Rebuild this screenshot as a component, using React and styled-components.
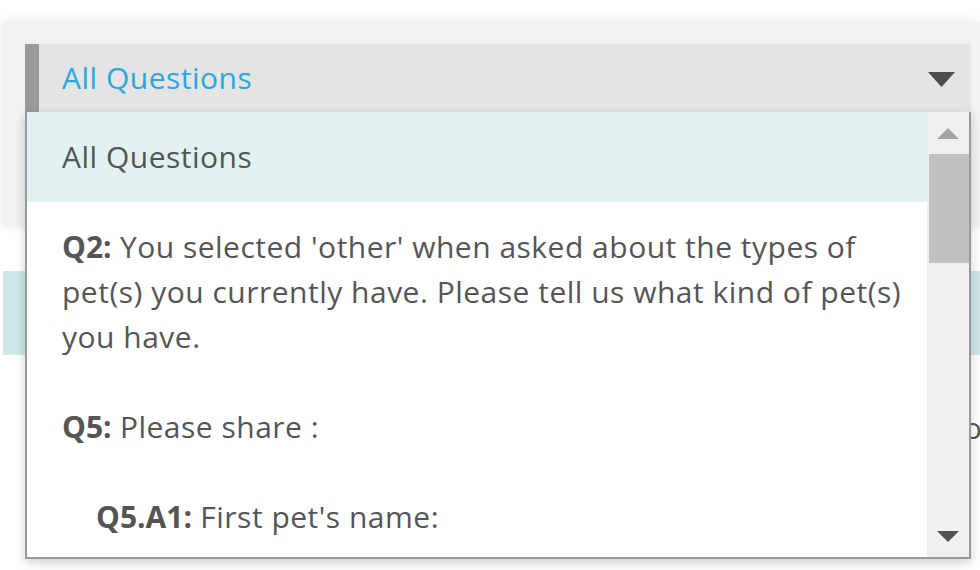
import styled, { createGlobalStyle } from 'styled-components'

const GlobalStyle = createGlobalStyle`
    html, body {
        margin: 0;
        padding: 0;
        background: #ffffff;
        overflow: hidden;
    }
    body {
        font-family: 'Open Sans', 'Noto Sans', sans-serif;
        color: #555555;
    }
`

const options = [
    { id: 'all', label: 'All Questions', active: true },
    {
        id: 'q2',
        tag: 'Q2:',
        label: " You selected 'other' when asked about the types of pet(s) you currently have. Please tell us what kind of pet(s) you have.",
    },
    { id: 'q5', tag: 'Q5:', label: ' Please share :' },
    { id: 'q5a1', tag: 'Q5.A1:', label: " First pet's name:", nested: true },
]

const Caret = ({ color, up }) => (
    <svg width="22" height="12" viewBox="0 0 22 12">
        <path d={up ? 'M0 12 L11 1 L22 12 Z' : 'M0 0 L22 0 L11 11 Z'} fill={color} />
    </svg>
)

const App = () => {
    return (
        <>
            <GlobalStyle />
            <Page>
                <FilterPanel>
                    <SelectWrap>
                        <SelectBox>
                            <SelectValue>All Questions</SelectValue>
                            <SelectArrow>
                                <svg width="27" height="16" viewBox="0 0 27 16">
                                    <path d="M0 0 L27 0 L13.5 15 Z" fill="#4b4b4b" />
                                </svg>
                            </SelectArrow>
                        </SelectBox>
                        <Dropdown>
                            <OptionList>
                                {options.map((o) => (
                                    <Option key={o.id} $active={o.active} $nested={o.nested}>
                                        {o.tag && <Tag>{o.tag}</Tag>}
                                        {o.label}
                                    </Option>
                                ))}
                            </OptionList>
                            <ScrollBar>
                                <ScrollButton>
                                    <Caret color="#a3a3a3" up />
                                </ScrollButton>
                                <ScrollThumb />
                                <ScrollTrack />
                                <ScrollButton $bottom>
                                    <Caret color="#505050" />
                                </ScrollButton>
                            </ScrollBar>
                        </Dropdown>
                    </SelectWrap>
                </FilterPanel>
                <Content>
                    <Band />
                    <ResultRow>Do</ResultRow>
                </Content>
            </Page>
        </>
    )
}

export default App

const Page = styled.div`
    width: 980px;
    height: 570px;
    padding: 22px 0 0 3px;
    box-sizing: border-box;
    overflow: hidden;
    position: relative;
`

const FilterPanel = styled.div`
    position: relative;
    z-index: 2;
    background: #f1f1f1;
    height: 203px;
    padding: 22px 9px 0 22px;
    box-sizing: border-box;
    box-shadow: 0 0 10px rgba(0, 0, 0, 0.12);
`

const SelectWrap = styled.div`
    position: relative;
    width: 946px;
`

const SelectBox = styled.div`
    display: flex;
    align-items: center;
    justify-content: space-between;
    height: 68px;
    background: #e4e4e4;
    border-left: 14px solid #999999;
    padding: 0 16px 0 23px;
    box-sizing: border-box;
`

const SelectValue = styled.span`
    font-size: 30px;
    letter-spacing: 0.5px;
    color: #2aa7dc;
    margin-top: -2px;
`

const SelectArrow = styled.span`
    display: flex;
    margin-top: 4px;
`

const Dropdown = styled.div`
    position: absolute;
    top: 100%;
    left: 0;
    width: 946px;
    height: 447px;
    display: flex;
    background: #ffffff;
    border: 2px solid #999999;
    border-top: none;
    box-sizing: border-box;
    box-shadow: 0 4px 10px rgba(0, 0, 0, 0.18);
`

const OptionList = styled.div`
    flex: 1;
    overflow: hidden;
`

const Option = styled.div`
    padding: 22px 14px 23px ${(p) => (p.$nested ? '69px' : '35px')};
    font-size: 30px;
    letter-spacing: 0.5px;
    line-height: 45px;
    color: #555555;
    background: ${(p) => (p.$active ? '#e2f2f1' : 'transparent')};
`

const Tag = styled.b`
    font-weight: 700;
    letter-spacing: 0;
`

const ScrollBar = styled.div`
    width: 42px;
    display: flex;
    flex-direction: column;
    background: #f0f0f0;
`

const ScrollButton = styled.div`
    height: ${(p) => (p.$bottom ? '40px' : '42px')};
    display: flex;
    align-items: ${(p) => (p.$bottom ? 'flex-start' : 'center')};
    justify-content: center;
    padding-top: ${(p) => (p.$bottom ? '14px' : '0')};
    box-sizing: border-box;
`

const ScrollThumb = styled.div`
    height: 109px;
    margin: 0 0 0 2px;
    background: #c1c1c1;
`

const ScrollTrack = styled.div`
    flex: 1;
`

const Content = styled.div`
    padding-top: 46px;
`

const Band = styled.div`
    height: 84px;
    background: #cfe7e6;
`

const ResultRow = styled.div`
    padding: 50px 0 0 939px;
    font-size: 30px;
    line-height: 45px;
    white-space: nowrap;
    color: #555555;
`
